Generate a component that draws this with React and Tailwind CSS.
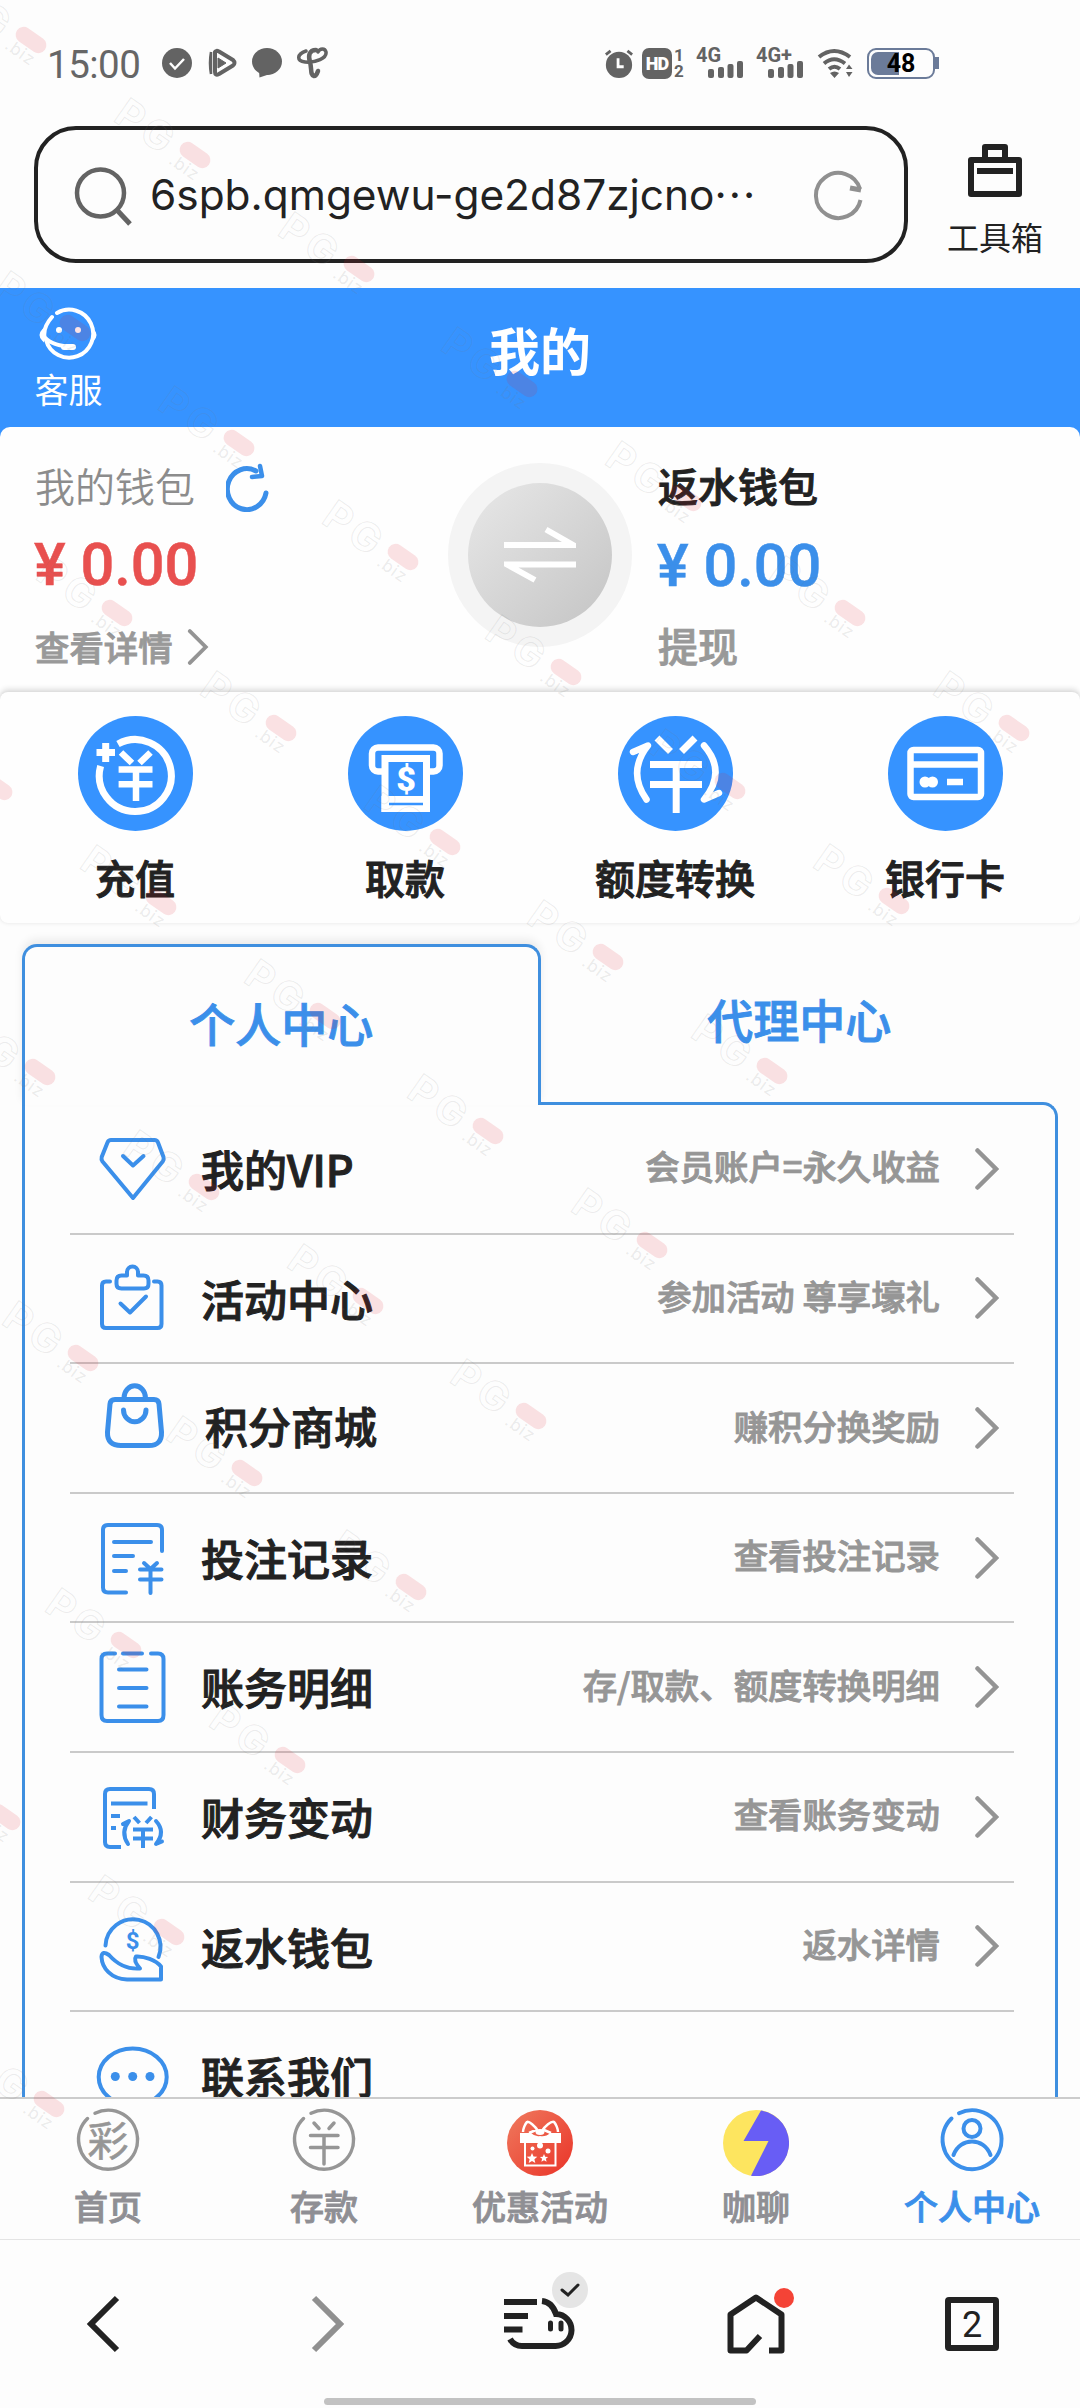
import { useState } from 'react'

const quickActions = [
  { label: '充值', Icon: RechargeIcon },
  { label: '取款', Icon: WithdrawIcon },
  { label: '额度转换', Icon: TransferIcon },
  { label: '银行卡', Icon: BankCardIcon },
]

const menuItems = [
  { label: '我的VIP', note: '会员账户=永久收益', Icon: VipIcon },
  { label: '活动中心', note: '参加活动 尊享壕礼', Icon: ClipboardIcon },
  { label: '积分商城', note: '赚积分换奖励', Icon: BagIcon, shifted: true },
  { label: '投注记录', note: '查看投注记录', Icon: BetRecordIcon },
  { label: '账务明细', note: '存/取款、额度转换明细', Icon: ListIcon },
  { label: '财务变动', note: '查看账务变动', Icon: FinanceIcon },
  { label: '返水钱包', note: '返水详情', Icon: HandCoinIcon },
  { label: '联系我们', note: '', Icon: ContactIcon },
]

const tabs = [
  { label: '首页', Icon: LotteryIcon },
  { label: '存款', Icon: DepositIcon },
  { label: '优惠活动', Icon: GiftIcon },
  { label: '咖聊', Icon: ChatBoltIcon },
  { label: '个人中心', Icon: UserIcon },
]

// rows of stamps: first pill centre and how many follow along the diagonal
const stampRows = [
  { x: 31, y: 40, count: 7 },
  { x: 75, y: 328, count: 6 },
  { x: 117, y: 613, count: 5 },
  { x: -3, y: 787, count: 5 },
  { x: 40, y: 1072, count: 4 },
  { x: 83, y: 1358, count: 3 },
  { x: 126, y: 1645, count: 2 },
  { x: 5, y: 1817, count: 2 },
  { x: 49, y: 2104, count: 1 },
]

/* ---------- quick action icons ---------- */

function RechargeIcon() {
  return (
    <svg viewBox="0 0 115 115" className="w-[115px] h-[115px]" fill="none" stroke="#fff" strokeWidth="7">
      <circle cx="57.5" cy="57.5" r="57.5" fill="#3693ff" stroke="none" />
      <path d="M40 28 A36 36 0 1 1 22.6 50" />
      <path d="M18.5 36.5H37M27.7 27V46" />
      <path d="M43 36.5L54 47M72.5 36.5L61.5 47M40.6 53.5H74.5M40.6 68.3H74.5M58 53V85" strokeWidth="6.5" />
    </svg>
  )
}

function WithdrawIcon() {
  return (
    <svg viewBox="0 0 115 115" className="w-[115px] h-[115px]" fill="none" stroke="#fff" strokeWidth="7">
      <circle cx="57.5" cy="57.5" r="57.5" fill="#3693ff" stroke="none" />
      <path d="M36 55.5H30a6 6 0 0 1-6-6V37.500a6 6 0 0 1 6-6H85.500a6 6 0 0 1 6 6V49.500a6 6 0 0 1-6 6H80" strokeWidth="6.500" />
      <path d="M37 96V42.500H78.500V96" />
      <rect x="33.500" y="80" width="48.500" height="16" fill="#fff" stroke="none" />
      <path d="M41 88H75" stroke="#3693ff" strokeWidth="2.500" />
      <text x="58" y="74.500" textAnchor="middle" className="font-['Roboto'] font-black text-[34px]" fill="#fff" stroke="none">$</text>
    </svg>
  )
}

function TransferIcon() {
  return (
    <svg viewBox="0 0 115 115" className="w-[115px] h-[115px]" fill="none" stroke="#fff" strokeWidth="7">
      <circle cx="57.5" cy="57.5" r="57.5" fill="#3693ff" stroke="none" />
      <path d="M39 22L52.500 35.500M77 22L63.500 35.500M32 48.500H84M32 68.500H84M58.200 48V97" />
      <path d="M15 36L30 29.500Q9 56 28.500 83.500M86 29.500Q109 56 86 83.500L101 77" strokeLinecap="round" strokeLinejoin="round" strokeWidth="6.500" />
    </svg>
  )
}

function BankCardIcon() {
  return (
    <svg viewBox="0 0 115 115" className="w-[115px] h-[115px]" fill="none" stroke="#fff" strokeWidth="6.5">
      <circle cx="57.5" cy="57.5" r="57.5" fill="#3693ff" stroke="none" />
      <rect x="22.500" y="34" width="70.500" height="47" rx="3" />
      <path d="M22 48.500H93M59 66H75" />
      <circle cx="37" cy="66" r="5.500" fill="#fff" stroke="none" />
      <circle cx="44.500" cy="66" r="5.500" fill="#fff" stroke="none" />
    </svg>
  )
}

/* ---------- menu icons ---------- */

function MenuSvg({ children, strokeWidth = 4 }) {
  return (
    <svg
      viewBox="0 0 76 76"
      className="w-[76px] h-[76px] overflow-visible shrink-0"
      fill="none"
      stroke="#3b8fea"
      strokeWidth={strokeWidth}
      strokeLinecap="round"
      strokeLinejoin="round"
    >
      {children}
    </svg>
  )
}

function VipIcon() {
  return (
    <MenuSvg>
      <path d="M15 9H58.500Q61 9 62 11.500L67.500 26Q68.200 28.500 66.700 30.500L37 67L6.500 30.500Q5 28.500 5.700 26L11.500 11.500Q12.500 9 15 9Z" />
      <path d="M27 25L37 34.500L47.500 25" />
    </MenuSvg>
  )
}

function ClipboardIcon() {
  return (
    <MenuSvg>
      <path d="M14 21.500H10Q6 21.500 6 25.500V64Q6 68 10 68H61.500Q65.500 68 65.500 64V25.500Q65.500 21.500 61.500 21.500H58" />
      <path d="M31 15.500V12a5.500 5.500 0 0 1 11 0V15.500H47.500Q52.500 15.500 52.500 20.500V24Q52.500 28.500 48 28.500H25.500Q20.500 28.500 20.500 24V20.500Q20.500 15.500 25.500 15.500Z" />
      <path d="M24.500 43.500L34 52.500L50 36.500" />
    </MenuSvg>
  )
}

function BagIcon() {
  return (
    <MenuSvg strokeWidth={5}>
      <path d="M19 9.500H58Q62.500 9.500 63 14L65.500 42Q66 55.500 53 55.500H25Q11 55.500 11.500 42L14 14Q14.500 9.500 19 9.500Z" />
      <path d="M28 8a10.500 12 0 0 1 21.500 0M27.500 20a11 11.500 0 0 0 22.500 0" />
    </MenuSvg>
  )
}

function BetRecordIcon() {
  return (
    <MenuSvg>
      <path d="M66 31V10Q66 5 61 5H12Q7 5 7 10V67.500Q7 72.500 12 72.500H30" />
      <path d="M18 22H55M18 36H37M18 51H30" />
      <path d="M48 43L54.500 49L61 43M44 49.500H65.500M44 59.500H65.500M54.500 49V73" />
    </MenuSvg>
  )
}

function ListIcon() {
  return (
    <MenuSvg>
      <path d="M19 4.500H11Q5.500 4.500 5.500 10V66Q5.500 72 11 72H62Q67.500 72 67.500 66V10Q67.500 4.500 62 4.500H55M27 4.500H46" />
      <path d="M23 20.500H50.500M23 39H50.500M23 57.500H50.500" />
    </MenuSvg>
  )
}

function FinanceIcon() {
  return (
    <MenuSvg>
      <path d="M58 30V15Q58 10 53 10H14Q9 10 9 15V63Q9 68 14 68H25" strokeLinecap="butt" />
      <path d="M15 24.500H51.500M15 37H24M15 49H20" strokeLinecap="butt" />
      <path d="M38 38L43.500 44M55.500 38L50 44M37 50.500H57M37 59.500H57M47 50V69" strokeLinecap="butt" />
      <path d="M27 45L33 42Q24 53 32 65M60 42Q70 53 60 65L66 62.500" />
    </MenuSvg>
  )
}

function HandCoinIcon() {
  return (
    <MenuSvg>
      <path d="M9.500 37.500A27.500 27.500 0 1 1 62.500 49" />
      <path d="M5.500 49Q6 42 13 47C22 57 31 61.500 44 60.500C40 56 37.500 52 40 48.500C48 48 60 52 65 58.500V71.500H31C15 71 6 60 5.500 49Z" />
      <text x="36.700" y="41" textAnchor="middle" className="font-['Roboto'] font-bold text-[24px]" fill="#3b8fea" stroke="none">$</text>
    </MenuSvg>
  )
}

function ContactIcon() {
  return (
    <MenuSvg>
      <ellipse cx="36.700" cy="39" rx="34" ry="28.500" />
      <g fill="#3b8fea" stroke="none">
        <circle cx="19.300" cy="38.500" r="4.500" />
        <circle cx="36.700" cy="38.500" r="4.500" />
        <circle cx="54" cy="38.500" r="4.500" />
      </g>
    </MenuSvg>
  )
}

/* ---------- tab bar icons ---------- */

function LotteryIcon() {
  return (
    <svg viewBox="0 0 66 66" className="w-[66px] h-[66px]" fill="none" stroke="#969696" strokeWidth="3.500" strokeLinecap="round">
      <path d="M20 5.200A29.500 29.500 0 1 1 12.500 10.500" />
      <text x="33" y="48" textAnchor="middle" className="font-['Noto_Sans_CJK_SC',sans-serif] font-normal text-[41px]" fill="#969696" strokeWidth="0.600">彩</text>
    </svg>
  )
}

function DepositIcon() {
  return (
    <svg viewBox="0 0 66 66" className="w-[66px] h-[66px]" fill="none" stroke="#969696" strokeWidth="3.500" strokeLinecap="round">
      <path d="M20 5.200A29.500 29.500 0 1 1 12.500 10.500" />
      <path d="M23 15L28 20.500M43 15L38 20.500M19.500 27.500H47M19.500 39.500H47M33 28V56" />
    </svg>
  )
}

function GiftIcon() {
  return (
    <svg viewBox="0 0 66 66" className="w-[66px] h-[66px] translate-y-[2px]" fill="none" stroke="#fff" strokeWidth="2">
      <defs>
        <linearGradient id="gift" x1="0" y1="0" x2="1" y2="1">
          <stop offset="0" stopColor="#ef7a5e" />
          <stop offset="1" stopColor="#ea3328" />
        </linearGradient>
      </defs>
      <circle cx="33" cy="33" r="33" fill="url(#gift)" stroke="none" />
      <path d="M31 21C28 16 22 11 20 12C18 14 16 19 16 22M35 21C38 16 44 11 47 12C49 14 51 19 51 22M22 23L29 20M44 23L37 20" strokeWidth="2.500" />
      <ellipse cx="33" cy="22" rx="4.500" ry="3" fill="#fff" stroke="none" />
      <path d="M13 23H24Q28 27 33 26Q39 27 43 23H54V33H13Z" fill="#fff" stroke="none" />
      <path d="M18 33V55.500H48.500V33" />
      <path d="M25 43l1.500 3.500 3.800.3-2.900 2.500.9 3.700-3.300-2-3.300 2 .9-3.700-2.900-2.500 3.800-.3ZM37 44l1.200 2.700 2.900.2-2.200 1.900.7 2.900-2.600-1.500-2.600 1.500.7-2.900-2.200-1.900 2.900-.2Z" fill="#fff" stroke="none" />
      <g fill="#fff" stroke="none">
        <circle cx="33" cy="35.500" r="3" />
        <circle cx="25.500" cy="38.500" r="2" />
        <circle cx="41" cy="41" r="2.500" />
      </g>
    </svg>
  )
}

function ChatBoltIcon() {
  return (
    <svg viewBox="0 0 66 66" className="w-[66px] h-[66px] translate-y-[2px]">
      <circle cx="33" cy="33" r="33" fill="#fde55f" />
      <path d="M38 .5L20.500 31H45.500L28 65.800A33 33 0 0 0 38 .5Z" fill="#685df5" />
    </svg>
  )
}

function UserIcon() {
  return (
    <svg viewBox="0 0 66 66" className="w-[66px] h-[66px]" fill="none" stroke="#3b8fea" strokeWidth="4" strokeLinecap="round">
      <path d="M20 5.200A29.500 29.500 0 1 1 12.500 10.500" />
      <circle cx="33" cy="20.500" r="8.500" />
      <path d="M14.500 47C21 29 45 29 51.500 47" />
    </svg>
  )
}

/* ---------- page parts ---------- */

function Signal({ label }) {
  return (
    <svg viewBox="0 0 48 32" className="w-[48px] h-[32px] overflow-visible" fill="#636363">
      <text x="0" y="15" className="font-['Roboto'] font-bold text-[20px]">{label}</text>
      <rect x="12" y="22" width="6" height="9" rx="2" />
      <rect x="22" y="20" width="6" height="11" rx="2" />
      <rect x="31.500" y="17" width="6" height="14" rx="2" />
      <rect x="41" y="14" width="6" height="17" rx="2" />
    </svg>
  )
}

function StatusBar() {
  return (
    <div className="h-[126px] pl-[47px] pr-[141px] flex items-center justify-between">
      <div className="flex items-center">
        <span className="w-[114px] font-['Roboto'] text-[38.500px] leading-none text-[#666] pt-[4px] tracking-[-0.5px]">15:00</span>
        <div className="flex items-center gap-[13px]">
          <svg viewBox="0 0 32 32" className="w-[32px] h-[32px]">
            <circle cx="16" cy="16" r="15" fill="#636363" />
            <path d="M9 16L14 21.500L23 12" fill="none" stroke="#fff" strokeWidth="2.500" />
          </svg>
          <svg viewBox="0 0 32 32" className="w-[32px] h-[32px]" fill="none" stroke="#636363" strokeLinejoin="round">
            <path d="M5 27V5M5 5Q3 16 5 27" strokeWidth="2.500" />
            <path d="M9 5Q10 3 13 4.500L27 13Q30 16 27 18.500L13 27Q9 29 9 25Z" strokeWidth="4" />
            <path d="M12 11L20 16L12 21Z" fill="#636363" strokeWidth="1" />
          </svg>
          <svg viewBox="0 0 32 32" className="w-[32px] h-[32px]" fill="#636363">
            <ellipse cx="16" cy="14.500" rx="15" ry="13.500" />
            <path d="M8 23L8.500 30.500L19 27Z" />
          </svg>
          <svg viewBox="0 0 32 32" className="w-[32px] h-[32px]" fill="none" stroke="#636363" strokeLinecap="round">
            <path d="M10 4C1 7 0 14 9 15C20 16 31 11 30 5C29 1 24 1 22 5" strokeWidth="3.500" />
            <path d="M20 3C13 3 12 9 14 15C16 22 14 28 18 29C20 29 21 27 22 24" strokeWidth="4.500" />
          </svg>
        </div>
      </div>
      <div className="flex items-center">
        <svg viewBox="0 0 32 32" className="w-[30px] h-[32px] mr-[8px]">
          <circle cx="16" cy="18" r="14" fill="#636363" />
          <path d="M15 11V20H21" fill="none" stroke="#fff" strokeWidth="3" />
          <path d="M2 7L7 3M30 7L25 3" stroke="#636363" strokeWidth="3" />
        </svg>
        <div className="w-[30px] h-[31px] rounded-[7px] bg-[#636363] text-white font-['Roboto'] font-black text-[18px] leading-[31px] text-center tracking-[-1px]">HD</div>
        <div className="w-[12px] ml-[1px] mr-[11px] font-['Roboto'] font-bold text-[17px] leading-[16px] text-[#636363]">
          <div className="text-center">1</div>
          <div className="text-center">2</div>
        </div>
        <Signal label="4G" />
        <span className="w-[12px]" />
        <Signal label="4G+" />
        <svg viewBox="0 0 36 32" className="w-[36px] h-[32px] ml-[13px] mr-[14px]" fill="none" stroke="#636363" strokeWidth="4">
          <path d="M2 10Q17 -2 33 10M7 16.500Q17 8 28 16.500M12 22Q17.500 17.500 23 22" />
          <path d="M13 26Q17.500 23 22 26L17.500 31ZM29 22L32 17.500L35.500 22ZM29 25L32 30L35.500 25Z" fill="#636363" stroke="none" />
        </svg>
        <div className="flex items-center">
          <div className="relative w-[68px] h-[31px] rounded-[9px] border-2 border-[#6b7b99] p-[2px]">
            <div className="w-[28px] h-[23px] rounded-l-[7px] bg-[#6b7b99]" />
            <span className="absolute inset-0 text-center font-['Roboto'] font-bold text-[25px] leading-[28px] text-black">48</span>
          </div>
          <div className="w-[4px] h-[12px] bg-[#6b7b99]" />
        </div>
      </div>
    </div>
  )
}

function AddressBar() {
  return (
    <div className="h-[162px] pl-[34px] flex items-start">
      <div className="w-[874px] h-[137px] shrink-0 rounded-[42px] border-[4.5px] border-[#222] flex items-center">
        <svg viewBox="0 0 60 60" className="w-[60px] h-[60px] shrink-0 ml-[36px] mt-[4px]" fill="none" stroke="#636363" strokeWidth="4.5">
          <circle cx="26.500" cy="26" r="23.500" />
          <path d="M42.500 42.500L56 57" strokeWidth="5" />
        </svg>
        <span className="ml-[16px] w-[662px] shrink-0 whitespace-nowrap font-['Inter','Noto_Sans_CJK_SC',sans-serif] text-[42.400px] leading-[60px] text-[#222]">
          6spb.qmgewu-ge2d87zjcno<span className="tracking-[2px]">···</span>
        </span>
        <svg viewBox="0 0 52 52" className="w-[52px] h-[52px] shrink-0 mt-[1px]" fill="none" stroke="#909090" strokeWidth="4">
          <path d="M48.500 31A22.500 22.500 0 1 1 48 20" />
          <path d="M38 19L49 21" strokeWidth="5" />
        </svg>
      </div>
      <div className="ml-[33px] w-[108px] pt-[16px] flex flex-col items-center">
        <svg viewBox="0 0 56 58" className="w-[56px] h-[58px]" fill="none" stroke="#222" strokeWidth="6" strokeLinejoin="round">
          <path d="M4 18H52V52H4ZM18 18V5H38V18" />
          <path d="M10 29H46" />
        </svg>
        <span className="text-[32px] leading-[44px] mt-[14px] text-[#222]">工具箱</span>
      </div>
    </div>
  )
}

function WalletCard() {
  return (
    <div className="h-[265px] bg-[#3693ff]">
      <div className="h-full bg-[#fefefe] rounded-t-[10px] flex pl-[35px]">
        <div className="w-[413px] pt-[30px]">
          <div className="flex items-center h-[60px]">
            <span className="text-[40px] -mt-[4px] font-[350] text-[#8c8c8c]">我的钱包</span>
            <svg viewBox="0 0 44 50" className="w-[44px] h-[50px] ml-[31px]" fill="none" stroke="#3b8fea" strokeWidth="5" strokeLinecap="round">
              <path d="M40 31A19.500 20.500 0 1 1 30 9" />
              <path d="M34 4L36 14L26 15" strokeWidth="4.500" strokeLinejoin="round" />
            </svg>
          </div>
          <div className="h-[80px] mt-[8px] -ml-[1px] font-['Roboto'] font-medium text-[59.500px] leading-[80px] text-[#e8504f] [-webkit-text-stroke:0.5px]">¥ 0.00</div>
          <div className="flex items-center h-[50px] mt-[17px] text-[#999]">
            <span className="text-[34.400px] font-medium [-webkit-text-stroke:0.9px]">查看详情</span>
            <Chevron className="w-[22px] h-[36px] ml-[14px]" />
          </div>
        </div>
        <div className="w-[184px] h-[184px] mt-[36px] rounded-full bg-[#f4f4f4] flex items-center justify-center">
          <div className="w-[144px] h-[144px] rounded-full bg-linear-to-br from-[#e8e8e8] to-[#c4c4c4] flex items-center justify-center">
            <svg viewBox="0 0 72 60" className="w-[72px] h-[60px]" fill="none" stroke="#fff" strokeWidth="6">
              <path d="M0 20H69L42 4.500M72 39.500H3L31 55" />
            </svg>
          </div>
        </div>
        <div className="ml-[26px] pt-[28px]">
          <div className="h-[60px] text-[40px] leading-[60px] font-medium text-[#222] [-webkit-text-stroke:0.9px]">返水钱包</div>
          <div className="h-[80px] mt-[11px] -ml-[1px] font-['Roboto'] font-medium text-[59.500px] leading-[80px] text-[#3b8fea] [-webkit-text-stroke:0.5px]">¥ 0.00</div>
          <div className="h-[50px] mt-[14px] text-[40px] leading-[50px] font-medium text-[#999] [-webkit-text-stroke:0.9px]">提现</div>
        </div>
      </div>
    </div>
  )
}

function Chevron({ className }) {
  return (
    <svg viewBox="0 0 24 42" className={className} fill="none" stroke="#949494" strokeWidth="4.500" strokeLinecap="round">
      <path d="M2.500 2.500L21 21L2.500 39.500" />
    </svg>
  )
}

function BrowserBar() {
  return (
    <div className="h-[168px] bg-[#fdfdfd] flex flex-col justify-between items-center">
      <div className="w-full h-[158px] grid grid-cols-5 justify-items-center items-center pt-[10px]">
        <svg viewBox="0 0 40 60" className="w-[40px] h-[60px] -ml-[6px]" fill="none" stroke="#222" strokeWidth="6">
          <path d="M32 4L6 30L32 56" />
        </svg>
        <svg viewBox="0 0 40 60" className="w-[40px] h-[60px] ml-[6px]" fill="none" stroke="#909090" strokeWidth="6">
          <path d="M7 4L33 30L7 56" />
        </svg>
        <div className="relative">
          <svg viewBox="0 0 72 56" className="w-[72px] h-[56px]" fill="none" stroke="#222" strokeWidth="6">
            <path d="M0 6H33M0 20H24M0 33.500H18.500" />
            <path d="M6 43Q10 50 18 50H51A16 16 0 0 0 52 18Q48 6 38 5" />
            <path d="M46.500 27V33M57 27V33" strokeWidth="5" strokeLinecap="round" />
          </svg>
          <div className="absolute -top-[24px] left-[48px] w-[36px] h-[36px] rounded-full bg-[#e5e5e5] flex items-center justify-center">
            <svg viewBox="0 0 20 16" className="w-[20px] h-[16px]" fill="none" stroke="#222" strokeWidth="3" strokeLinecap="round">
              <path d="M2 8L8 13L18 3" />
            </svg>
          </div>
        </div>
        <div className="relative">
          <svg viewBox="0 0 60 62" className="w-[60px] h-[62px]" fill="none" stroke="#222" strokeWidth="6" strokeLinejoin="round">
            <path d="M43 57.500H55.500V21.500L30 4.500L4.500 21.500V57.500H20.500L34 43" />
          </svg>
          <div className="absolute -top-[5px] left-[48px] w-[20px] h-[20px] rounded-full bg-[#f44336]" />
        </div>
        <div className="w-[54px] h-[54px] rounded-[4px] border-[6px] border-[#222] font-['Roboto'] text-[36px] leading-[44px] text-center text-[#222]">2</div>
      </div>
      <div className="w-[432px] h-[7px] mb-[3px] rounded-full bg-[#c2c2c2]" />
    </div>
  )
}

function Stamp({ x, y }) {
  return (
    <div className="absolute w-0 h-0" style={{ left: x, top: y, transform: 'rotate(35deg)' }}>
      <span className="absolute -left-[88px] -top-[14px] w-[74px] font-['Inter'] font-bold text-[40px] leading-[38px] tracking-[5px] text-transparent [-webkit-text-stroke:1px_rgba(120,120,120,0.14)]">PG</span>
      <span className="absolute -left-[17px] -top-[8px] w-[34px] h-[16px] rounded-full bg-[#e0202e]/13" />
      <span className="absolute -left-[18px] top-[6px] font-['Inter'] text-[17px] leading-[20px] tracking-[1px] text-[#777]/15">.biz</span>
    </div>
  )
}

export default function App() {
  const [activeTab, setActiveTab] = useState('personal')

  return (
    <div className="relative w-[1080px] h-[2408px] overflow-hidden bg-[#fdfdfd] flex flex-col font-['Noto_Sans_CJK_SC',sans-serif]">
      <StatusBar />
      <AddressBar />

      <div className="h-[139px] bg-[#3693ff] text-white grid grid-cols-3 px-[35px]">
        <div className="w-[67px] pt-[18px] flex flex-col items-center">
          <svg viewBox="0 0 60 56" className="w-[60px] h-[56px] mr-[2px]" fill="none" stroke="#fff" strokeWidth="4" strokeLinecap="round">
            <path d="M19 7A24 24 0 1 1 8 34M14 11Q5 21 6.500 31Q14 40 35 41" />
            <path d="M26 41H35" strokeWidth="6" />
            <circle cx="21" cy="24" r="3" fill="#fff" stroke="none" />
            <circle cx="40" cy="24" r="3" fill="#fff" stroke="none" />
            <path d="M5 24Q0 29 5 34ZM55 24Q60 29 55 34Z" fill="#fff" strokeWidth="2" />
          </svg>
          <span className="text-[34px] leading-[48px] mt-[3px] whitespace-nowrap">客服</span>
        </div>
        <h1 className="text-center text-[51px] leading-[123px] font-bold">我的</h1>
      </div>

      <WalletCard />

      <div className="h-[231px] bg-[#fefefe] rounded-[8px] shadow-[0_-4px_5px_rgba(0,0,0,0.09),0_0_4px_rgba(0,0,0,0.1)] grid grid-cols-4 shrink-0">
        {quickActions.map(({ label, Icon }) => (
          <div key={label} className="flex flex-col items-center pt-[24px]">
            <Icon />
            <span className="text-[40px] leading-[60px] mt-[16px] font-medium text-[#222] [-webkit-text-stroke:1px]">{label}</span>
          </div>
        ))}
      </div>

      <div className="h-[1174px] pt-[21px] px-[22px] overflow-hidden shrink-0">
        <div className="flex h-[158px] text-[46px] font-medium text-[#3b8fea] [-webkit-text-stroke:0.9px]">
          <button
            onClick={() => setActiveTab('personal')}
            className="relative z-10 w-[518.500px] h-[161px] shrink-0 pb-[8px] bg-[#fdfdfd] border-3 border-b-0 border-[#3f8fdf] rounded-t-[15px] shadow-[0_-5px_8px_rgba(0,0,0,0.07)]"
            aria-selected={activeTab === 'personal'}
          >
            个人中心
          </button>
          <button onClick={() => setActiveTab('agent')} className="flex-1 pb-[10px]" aria-selected={activeTab === 'agent'}>
            代理中心
          </button>
        </div>
        <div className="border-3 border-b-0 border-[#3f8fdf] rounded-tr-[15px] pl-[45px] pr-[41px]">
          {menuItems.map(({ label, note, Icon, shifted }) => (
            <div key={label} className="h-[129.600px] border-b-2 border-[#cacaca] flex items-center pl-[26px] pr-[15px]">
              <Icon />
              <span className={`text-[43px] font-medium text-[#222] [-webkit-text-stroke:1px] ${shifted ? 'ml-[33px] -mt-[6px]' : 'ml-[29px] -mt-[1px]'}`}>{label}</span>
              <span className="ml-auto -mt-[5px] text-[34.400px] font-medium text-[#969696] [-webkit-text-stroke:0.9px]">{note}</span>
              {note && <Chevron className="w-[24px] h-[42px] ml-[35px] shrink-0" />}
            </div>
          ))}
        </div>
      </div>

      <div className="h-[143px] shrink-0 border-t-2 border-t-[#ccc] border-b border-b-[#e4e4e4] bg-[#fdfdfd] grid grid-cols-5">
        {tabs.map(({ label, Icon }) => (
          <div key={label} className={`flex flex-col items-center pt-[9px] text-[34px] leading-[50px] font-medium [-webkit-text-stroke:0.9px] ${label === '个人中心' ? 'text-[#3b8fea]' : 'text-[#8f8f94]'}`}>
            <Icon />
            <span className="mt-[7px] whitespace-nowrap">{label}</span>
          </div>
        ))}
      </div>

      <BrowserBar />

      <div className="absolute inset-0 z-20 pointer-events-none">
        {stampRows.map((row) =>
          Array.from({ length: row.count }, (_, i) => (
            <Stamp key={`${row.x}-${i}`} x={row.x + i * 163.8} y={row.y + i * 114.6} />
          ))
        )}
      </div>
    </div>
  )
}
